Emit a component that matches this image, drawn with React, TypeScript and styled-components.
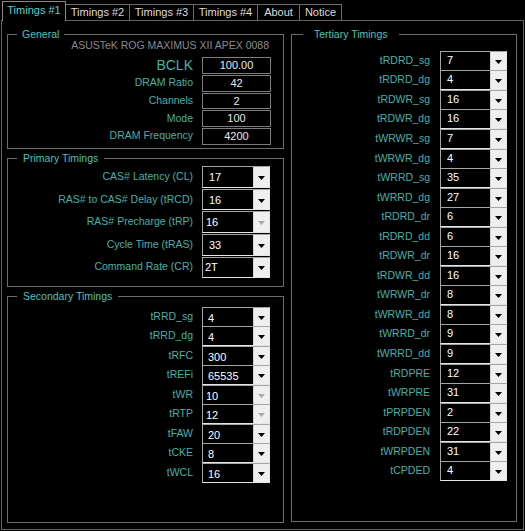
import styled, { createGlobalStyle } from "styled-components";

const GlobalStyle = createGlobalStyle`
  html, body {
    margin: 0;
    padding: 0;
    background: #000;
  }
  body {
    font-family: "Liberation Sans", Arial, sans-serif;
  }
`;

const Window = styled.div`
  width: 525px;
  height: 531px;
  box-sizing: border-box;
  padding: 1px 1px 1px 1px;
  background: #000;
  display: flex;
  flex-direction: column;
  font-size: 10.5px;
`;

const TabBar = styled.div`
  display: flex;
  align-items: flex-end;
  height: 20px;
  margin-bottom: -1px;
  padding-left: 1px;
  position: relative;
  z-index: 1;
`;

const Tab = styled.div<{ $active?: boolean; $w: number }>`
  box-sizing: border-box;
  width: ${({ $w }) => $w}px;
  height: ${({ $active }) => ($active ? "20px" : "16px")};
  margin-bottom: ${({ $active }) => ($active ? "0" : "1px")};
  border: 1px solid ${({ $active }) => ($active ? "#8a8a8a" : "#6e6e6e")};
  border-bottom: none;
  border-left-style: ${({ $active }) => ($active ? "solid" : "none")};
  background: #000;
  color: ${({ $active }) => ($active ? "#5dd0c6" : "#dcdcdc")};
  font-size: 11px;
  line-height: ${({ $active }) => ($active ? "17px" : "15px")};
  text-align: center;
  white-space: nowrap;
`;

const Panel = styled.div`
  flex: 1;
  box-sizing: border-box;
  border: 1px solid #626262;
  display: flex;
  gap: 7px;
  padding: 13px 6px 0 5px;
`;

const Column = styled.div`
  display: flex;
  flex-direction: column;
  gap: 9px;
`;

const Group = styled.div<{ $w: number; $h: number }>`
  position: relative;
  box-sizing: border-box;
  width: ${({ $w }) => $w}px;
  height: ${({ $h }) => $h}px;
  border: 1px solid #6c6c6c;
`;

const GroupTitle = styled.span<{ $left?: number; $pad?: number }>`
  position: absolute;
  top: -8px;
  left: ${({ $left }) => $left ?? 9}px;
  padding: 0 ${({ $pad }) => $pad ?? 6}px;
  background: #000;
  color: #4fc0b5;
  font-size: 10.5px;
  line-height: 14px;
  white-space: nowrap;
`;

const GeneralBody = styled.div`
  padding: 4px 12px 0 0;
`;

const Model = styled.div`
  text-align: right;
  color: #8a8a8a;
  line-height: 13px;
  margin: 0 2px 5px 0;
  white-space: nowrap;
`;

const Grid = styled.div<{
  $box: number;
  $row: number;
  $gap: number;
  $colGap: number;
  $top: number;
  $right: number;
}>`
  display: grid;
  grid-template-columns: 1fr ${({ $box }) => $box}px;
  grid-auto-rows: ${({ $row }) => $row}px;
  row-gap: ${({ $gap }) => $gap}px;
  column-gap: ${({ $colGap }) => $colGap}px;
  align-items: center;
  padding: ${({ $top, $right }) => `${$top}px ${$right}px 0 0`};
`;

const Label = styled.div<{ $big?: boolean }>`
  text-align: right;
  color: #47b0a6;
  font-size: ${({ $big }) => ($big ? "14px" : "10.5px")};
  line-height: 14px;
  padding-bottom: ${({ $big }) => ($big ? "0" : "2px")};
  white-space: nowrap;
`;

const ValueBox = styled.div`
  box-sizing: border-box;
  height: 100%;
  border: 1px solid #7c7c7c;
  color: #e8e8e8;
  font-size: 11px;
  line-height: 15px;
  text-align: center;
`;

const Combo = styled.div<{ $h: number }>`
  box-sizing: border-box;
  height: ${({ $h }) => $h}px;
  display: flex;
  border: 1px solid;
  border-color: #a4a4a4 #e6e6e6 #e6e6e6 #a4a4a4;
  background: #000;
`;

const ComboValue = styled.div<{ $indent: number; $shift: number }>`
  flex: 1;
  display: flex;
  align-items: center;
  padding-left: ${({ $indent }) => $indent}px;
  padding-top: ${({ $shift }) => Math.max($shift, 0) * 2}px;
  padding-bottom: ${({ $shift }) => Math.max(-$shift, 0) * 2}px;
  color: #fff;
  font-size: 11px;
`;

const ComboButton = styled.div<{ $disabled?: boolean }>`
  width: 16px;
  display: flex;
  align-items: center;
  justify-content: center;
  padding-top: 2px;
  box-sizing: border-box;
  background: #efefef;
  border-left: 1px solid #d4d4d4;
  color: ${({ $disabled }) => ($disabled ? "#a9a9a9" : "#000")};
`;

type Row = { label: string; value: string; indent?: number; disabled?: boolean };

const general: { label: string; value: string; big?: boolean }[] = [
  { label: "BCLK", value: "100.00", big: true },
  { label: "DRAM Ratio", value: "42" },
  { label: "Channels", value: "2" },
  { label: "Mode", value: "100" },
  { label: "DRAM Frequency", value: "4200" },
];

const primary: Row[] = [
  { label: "CAS# Latency (CL)", value: "17", indent: 6 },
  { label: "RAS# to CAS# Delay (tRCD)", value: "16", indent: 6 },
  { label: "RAS# Precharge (tRP)", value: "16", indent: 3, disabled: true },
  { label: "Cycle Time (tRAS)", value: "33", indent: 6 },
  { label: "Command Rate (CR)", value: "2T", indent: 2 },
];

const secondary: Row[] = [
  { label: "tRRD_sg", value: "4" },
  { label: "tRRD_dg", value: "4" },
  { label: "tRFC", value: "300" },
  { label: "tREFi", value: "65535" },
  { label: "tWR", value: "10", indent: 3, disabled: true },
  { label: "tRTP", value: "12", indent: 3, disabled: true },
  { label: "tFAW", value: "20" },
  { label: "tCKE", value: "8" },
  { label: "tWCL", value: "16" },
];

const tertiary: Row[] = [
  ["tRDRD_sg", "7"],
  ["tRDRD_dg", "4"],
  ["tRDWR_sg", "16"],
  ["tRDWR_dg", "16"],
  ["tWRWR_sg", "7"],
  ["tWRWR_dg", "4"],
  ["tWRRD_sg", "35"],
  ["tWRRD_dg", "27"],
  ["tRDRD_dr", "6"],
  ["tRDRD_dd", "6"],
  ["tRDWR_dr", "16"],
  ["tRDWR_dd", "16"],
  ["tWRWR_dr", "8"],
  ["tWRWR_dd", "8"],
  ["tWRRD_dr", "9"],
  ["tWRRD_dd", "9"],
  ["tRDPRE", "12"],
  ["tWRPRE", "31"],
  ["tPRPDEN", "2"],
  ["tRDPDEN", "22"],
  ["tWRPDEN", "31"],
  ["tCPDED", "4"],
].map(([label, value]) => ({ label, value }));

const tabs: { name: string; w: number }[] = [
  { name: "Timings #1", w: 64 },
  { name: "Timings #2", w: 64 },
  { name: "Timings #3", w: 64 },
  { name: "Timings #4", w: 64 },
  { name: "About", w: 42 },
  { name: "Notice", w: 42 },
];

function Arrow() {
  return (
    <svg width="7" height="4" viewBox="0 0 7 4">
      <polygon points="0,0 7,0 3.5,4" fill="currentColor" />
    </svg>
  );
}

function ComboRows(props: { rows: Row[]; h: number; indent: number; shift: number }) {
  return (
    <>
      {props.rows.map((r) => [
        <Label key={r.label + "l"}>{r.label}</Label>,
        <Combo key={r.label + "c"} $h={props.h}>
          <ComboValue $indent={r.indent ?? props.indent} $shift={props.shift}>
            {r.value}
          </ComboValue>
          <ComboButton $disabled={r.disabled}>
            <Arrow />
          </ComboButton>
        </Combo>,
      ])}
    </>
  );
}

export default function App() {
  return (
    <>
      <GlobalStyle />
      <Window>
        <TabBar>
          {tabs.map((t, i) => (
            <Tab key={t.name} $active={i === 0} $w={t.w}>
              {t.name}
            </Tab>
          ))}
        </TabBar>
        <Panel>
          <Column>
            <Group $w={277} $h={115}>
              <GroupTitle $pad={5}>General</GroupTitle>
              <GeneralBody>
                <Model>ASUSTeK ROG MAXIMUS XII APEX 0088</Model>
                <Grid $box={69} $row={16.75} $gap={1} $colGap={9} $top={0} $right={0}>
                  {general.map((g) => [
                    <Label key={g.label + "l"} $big={g.big}>
                      {g.label}
                    </Label>,
                    <ValueBox key={g.label + "v"}>{g.value}</ValueBox>,
                  ])}
                </Grid>
              </GeneralBody>
            </Group>
            <Group $w={277} $h={129}>
              <GroupTitle>Primary Timings</GroupTitle>
              <Grid $box={68} $row={21} $gap={1.6} $colGap={9} $top={7.5} $right={13}>
                <ComboRows rows={primary} h={21.5} indent={6} shift={0} />
              </Grid>
            </Group>
            <Group $w={277} $h={227}>
              <GroupTitle>Secondary Timings</GroupTitle>
              <Grid $box={68} $row={19.5} $gap={0} $colGap={9} $top={10} $right={13}>
                <ComboRows rows={secondary} h={20} indent={5} shift={1} />
              </Grid>
            </Group>
          </Column>
          <Column>
            <Group $w={226} $h={488}>
              <GroupTitle $left={11} $pad={11}>
                Tertiary Timings
              </GroupTitle>
              <Grid $box={67} $row={19.56} $gap={0} $colGap={10} $top={16} $right={9}>
                <ComboRows rows={tertiary} h={20} indent={6} shift={-1} />
              </Grid>
            </Group>
          </Column>
        </Panel>
      </Window>
    </>
  );
}
